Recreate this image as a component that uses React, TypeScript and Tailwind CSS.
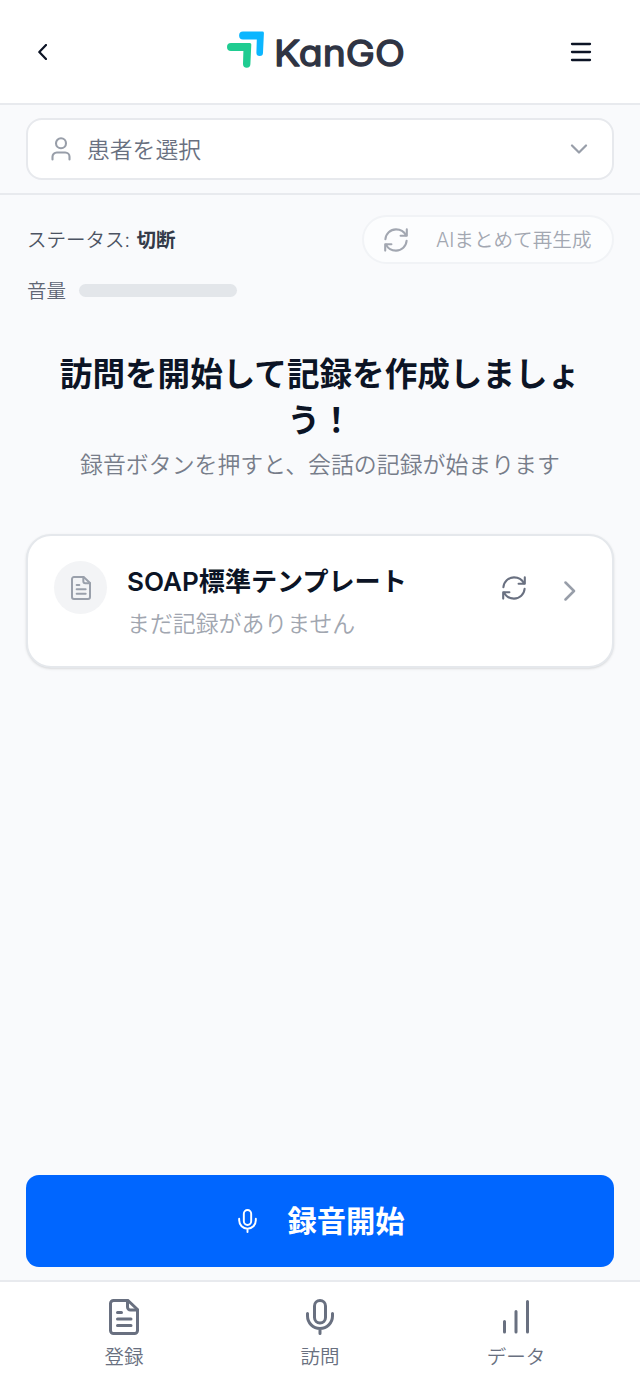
import type { ReactNode, SVGProps } from "react";

function Icon({ children, ...props }: SVGProps<SVGSVGElement> & { children: ReactNode }) {
  return (
    <svg
      viewBox="0 0 24 24"
      fill="none"
      stroke="currentColor"
      strokeWidth={1.5}
      strokeLinecap="round"
      strokeLinejoin="round"
      {...props}
    >
      {children}
    </svg>
  );
}

function RefreshIcon({ className }: { className: string }) {
  return (
    <Icon className={className} strokeWidth={2.1}>
      <path d="M1.4 11.2C1.8 5.6 6.3 1.4 12 1.4c4.6 0 8.2 2.4 10 6" />
      <path d="M22.8 1.4v6.4h-6.2" />
      <path d="M22.6 12.8c-.4 5.6-4.9 9.8-10.6 9.8-4.6 0-8.2-2.4-10-6" />
      <path d="M1.2 22.6v-6.4h6.2" />
    </Icon>
  );
}

function FileIcon({ className }: { className: string }) {
  return (
    <Icon className={className} viewBox="0 0 30 36" strokeWidth={3}>
      <path d="M4.5 1.5h14.5l9.5 9v21a3 3 0 0 1-3 3h-21a3 3 0 0 1-3-3v-27a3 3 0 0 1 3-3z" />
      <path d="M18.5 1.5v6.5a3 3 0 0 0 3 3h7" />
      <path d="M8.5 13.5h4M8.5 20h13.5M8.5 26.5h13.5" />
    </Icon>
  );
}

function MicIcon({ className, strokeWidth }: { className: string; strokeWidth: number }) {
  return (
    <Icon className={className} viewBox="0 0 28 36" strokeWidth={strokeWidth}>
      <rect x="8.5" y="1.5" width="11" height="22.5" rx="5.5" />
      <path d="M1.5 14.5v2.5a12.5 12.5 0 0 0 25 0v-2.5M14 29.5v5" />
    </Icon>
  );
}

function Logo() {
  return (
    <svg className="h-[48px] w-[184px]" viewBox="222 26 184 48" role="img" aria-label="KanGO">
      <path
        d="M243 31.6h19.4q1.6 0 1.5 1.6l-.9 19.6a3.3 3.3 0 0 1-6.6 0l.4-13.4H243a3.9 3.9 0 0 1 0-7.8z"
        fill="#0cb6ff"
      />
      <path
        d="M231 42.9h18.8q1.6 0 1.5 1.6l-.9 19.6a3.7 3.7 0 0 1-7.4 0l.4-13.2H231a4 4 0 0 1 0-8z"
        fill="#1fcc91"
      />
      <text
        x="274"
        y="65.5"
        textLength="131"
        lengthAdjust="spacingAndGlyphs"
        className="font-['Inter',sans-serif] text-[35.5px] font-normal [font-feature-settings:'cv11']"
        fill="#2f3443"
        stroke="#2f3443"
        strokeWidth="1.3"
        strokeLinejoin="round"
      >
        KanGO
      </text>
    </svg>
  );
}

const NAV_ITEMS = [
  { label: "登録", icon: <FileIcon className="h-9 w-[30px]" /> },
  { label: "訪問", icon: <MicIcon className="h-9 w-7" strokeWidth={3} /> },
  {
    label: "データ",
    icon: (
      <Icon className="h-9 w-7" viewBox="0 0 28 36" strokeWidth={3}>
        <path d="M2.5 22.5v10.5M14 12.5v20.5M25.5 2.5v30.5" />
      </Icon>
    ),
  },
];

export default function App() {
  return (
    <div className="flex h-[1385px] w-[640px] flex-col bg-[#f9fafc] font-['Inter','Noto_Sans_CJK_JP',sans-serif] text-[#0c1425]" lang="ja">
      <header className="flex h-[105px] shrink-0 items-center justify-between border-b-2 border-[#e8eaee] bg-white px-[26px]">
        <button className="flex h-10 w-8 items-center justify-center">
          <Icon className="h-4 w-[9px]" viewBox="0 0 9 16" strokeWidth={2.2}>
            <path d="M8 1 1.3 8 8 15" />
          </Icon>
        </button>
        <div className="-mt-[3px]">
          <Logo />
        </div>
        <button className="mr-[22px] flex h-10 w-[22px] items-center justify-center">
          <Icon className="h-5 w-[22px]" viewBox="0 0 22 20" strokeWidth={2.3}>
            <path d="M2 2h18M2 10h18M2 18h18" />
          </Icon>
        </button>
      </header>

      <div className="flex h-[90px] shrink-0 items-center border-b-2 border-[#e8eaee] px-[26px]">
        <button className="flex h-[62px] w-full items-center rounded-2xl border-2 border-[#e7e9ed] bg-white pr-6 pl-[23px] text-[22.8px] font-[350] text-[#697080]">
          <Icon className="h-6 w-5 text-[#989ea9]" viewBox="0 0 20 24" strokeWidth={2.1}>
            <circle cx="10" cy="6.3" r="5" />
            <path d="M1.5 22.5v-2.7a4.3 4.3 0 0 1 4.3-4.3h8.4a4.3 4.3 0 0 1 4.3 4.3v2.7" />
          </Icon>
          <span className="mt-[2px] ml-4">患者を選択</span>
          <Icon className="ml-auto h-[10px] w-[18px] text-[#989ea9]" viewBox="0 0 18 10" strokeWidth={2.2}>
            <path d="m2 1.5 7 7 7-7" />
          </Icon>
        </button>
      </div>

      <main className="flex flex-1 flex-col px-[26px] pt-5">
        <div className="flex h-[49px] items-center justify-between">
          <p className="mt-[3px] ml-px text-[19.5px] font-[350] text-[#4c5362]">
            ステータス: <span className="ml-px font-semibold text-[#343b49]">切断</span>
          </p>
          <button className="flex h-[49px] w-[252px] items-center rounded-full border-2 border-[#f1f3f6] bg-[#fcfdfe] pl-5 text-[19.6px] font-[350] text-[#a2a7b1]">
            <RefreshIcon className="h-6 w-6" />
            <span className="mt-[2px] ml-7 whitespace-nowrap">AIまとめて再生成</span>
          </button>
        </div>

        <div className="mt-[11px] flex h-[30px] items-center gap-[13px] pl-px">
          <span className="mt-[3px] text-[19.5px] font-[350] text-[#5f6675]">音量</span>
          <div className="h-[13px] w-[158px] rounded-full bg-[#e3e6ea]" />
        </div>

        <div className="mt-[46px] text-center">
          <h1 className="text-[32.6px] leading-[46px] font-semibold">
            訪問を開始して記録を作成しましょ
            <br />
            う！
          </h1>
          <p className="mt-[5px] text-[22.9px] leading-[34px] font-[350] text-[#777d8a]">
            録音ボタンを押すと、会話の記録が始まります
          </p>
        </div>

        <section className="mt-[52px] flex h-[134px] items-start rounded-[25px] border-2 border-[#e5e8ec] bg-white pt-[25px] pl-[26px] shadow-sm">
          <div className="flex size-[53px] shrink-0 items-center justify-center rounded-full bg-[#f3f4f6] text-[#9aa0ab]">
            <FileIcon className="h-6 w-5" />
          </div>
          <div className="ml-5">
            <h2 className="text-[26.1px] leading-[42px] font-semibold whitespace-nowrap">SOAP標準テンプレート</h2>
            <p className="text-[22.9px] leading-[42px] font-[350] text-[#a1a6b0]">まだ記録がありません</p>
          </div>
          <div className="mr-9 ml-auto flex h-[53px] items-center gap-[38px]">
            <RefreshIcon className="size-6 text-[#697080]" />
            <Icon className="mt-[6px] h-5 w-3 text-[#989ea9]" viewBox="0 0 12 20" strokeWidth={2.5}>
              <path d="m1.5 1.5 8.5 8.5-8.5 8.5" />
            </Icon>
          </div>
        </section>

        <button className="mt-auto mb-[13px] flex h-[92px] items-center justify-center rounded-[13px] bg-[#0066ff] pl-[3px] text-[29.3px] font-semibold text-white">
          <MicIcon className="mr-[30px] h-6 w-[19px]" strokeWidth={2.9} />
          <span className="mt-[2px]">録音開始</span>
        </button>
      </main>

      <nav className="flex h-[105px] shrink-0 border-t-2 border-[#e8eaee] bg-white px-[26px] pt-[17px]">
        {NAV_ITEMS.map((item) => (
          <a key={item.label} className="flex flex-1 flex-col items-center text-[19.5px] leading-7 font-[350] text-[#697080]">
            {item.icon}
            <span className="mt-[8px]">{item.label}</span>
          </a>
        ))}
      </nav>
    </div>
  );
}
